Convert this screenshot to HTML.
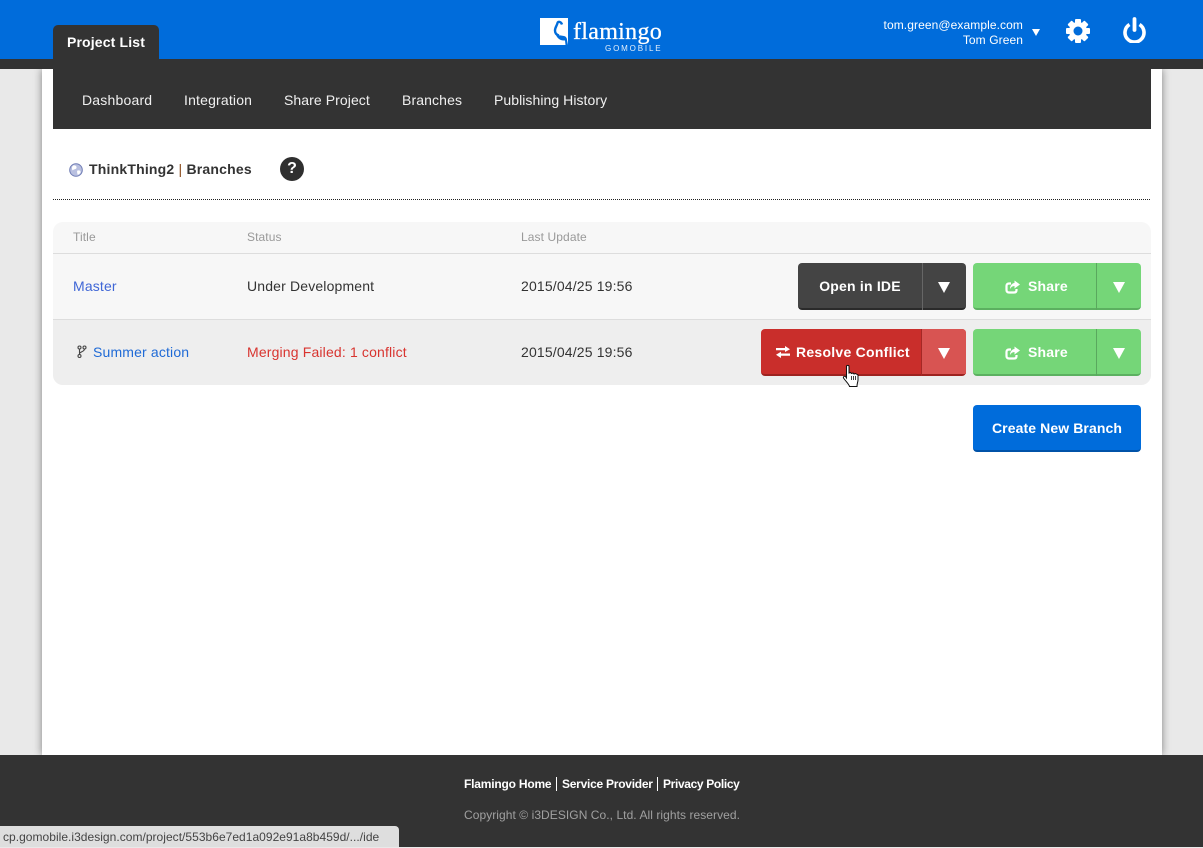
<!DOCTYPE html>
<html><head><meta charset="utf-8"><title>Branches</title>
<style>
html,body{margin:0;padding:0;width:1203px;height:847px;overflow:hidden;background:#e9e9e9;font-family:"Liberation Sans",sans-serif;}
.a{position:absolute;white-space:nowrap;}
.btn{position:absolute;height:47px;border-radius:4px;color:#fff;font-weight:bold;font-size:14px;line-height:46px;box-sizing:border-box;letter-spacing:.2px;}
.btn .sep{position:absolute;top:0;bottom:0;width:1px;}
.tri{position:absolute;width:0;height:0;border-left:6.5px solid transparent;border-right:6.5px solid transparent;border-top:11px solid #fff;top:19px;}
.th{font-size:12px;color:#999;top:230px;line-height:14px;letter-spacing:.1px;}
.td{font-size:14px;line-height:16px;letter-spacing:.16px;}
.nav{font-size:14px;color:#f0f0f0;top:92px;line-height:16px;}
</style></head><body>
<div class="a" style="left:0;top:0;width:1203px;height:59px;background:#006cdb"></div>
<div class="a" style="left:42px;top:69px;width:1120px;height:686px;background:#fff;box-shadow:0 0 8px rgba(0,0,0,.45)"></div>
<div class="a" style="left:0;top:59px;width:1203px;height:10px;background:#333"></div>
<div class="a" style="left:53px;top:25px;width:106px;height:34px;background:#333;border-radius:5px 5px 0 0;color:#fff;font-weight:bold;font-size:14px;line-height:34px;text-align:center;letter-spacing:.15px">Project List</div>
<div class="a" style="left:53px;top:59px;width:1098px;height:70px;background:#333"></div>
<div class="a nav" style="left:82px;letter-spacing:.2px">Dashboard</div>
<div class="a nav" style="left:184px;letter-spacing:.18px">Integration</div>
<div class="a nav" style="left:284px;letter-spacing:.08px">Share Project</div>
<div class="a nav" style="left:402px;letter-spacing:.12px">Branches</div>
<div class="a nav" style="left:494px;letter-spacing:.06px">Publishing History</div>

<svg class="a" style="left:540px;top:18px" width="29" height="28" viewBox="0 0 29 28"><rect width="28" height="27" fill="#fff"/><path d="M22 6.500C21 3.500 18 3 17.500 5C17 7.500 15 9.500 15 12.500C15 15.500 17 17 19 17.500" fill="none" stroke="#006cdb" stroke-width="2.400"/><path d="M15 13.500C16 18 20 17 24 18C26 18.500 27 20 27 22L28 27H25.500L25 22.500C20 23 16 20 15 13.500Z" fill="#006cdb"/></svg>
<div class="a" style="left:573px;top:18px;font-family:'Liberation Serif',serif;font-size:24px;line-height:28px;color:#fff;letter-spacing:.3px;-webkit-text-stroke:.3px #fff">flamingo</div>
<div class="a" style="left:605px;top:44px;font-size:8px;line-height:10px;color:#e4effb;letter-spacing:1.85px">GOMOBILE</div>

<div class="a" style="right:180px;top:18px;font-size:12px;line-height:15px;color:#fff;text-align:right;letter-spacing:.09px">tom.green@example.com<br>Tom Green</div>
<div class="a" style="left:1032px;top:29px;width:0;height:0;border-left:4px solid transparent;border-right:4px solid transparent;border-top:7px solid #fff"></div>
<svg class="a" style="left:1065px;top:18px" width="26" height="26" viewBox="0 0 26 26"><g fill="#fff"><circle cx="13" cy="13" r="9"/><rect x="10" y="1" width="6" height="6" rx="1"/><rect x="10" y="19" width="6" height="6" rx="1"/><rect x="1" y="10" width="6" height="6" rx="1"/><rect x="19" y="10" width="6" height="6" rx="1"/><g transform="rotate(45 13 13)"><rect x="10" y="1" width="6" height="6" rx="1"/><rect x="10" y="19" width="6" height="6" rx="1"/><rect x="1" y="10" width="6" height="6" rx="1"/><rect x="19" y="10" width="6" height="6" rx="1"/></g></g><circle cx="13" cy="13" r="4.500" fill="#006cdb"/></svg>
<svg class="a" style="left:1122px;top:17px" width="25" height="26" viewBox="0 0 25 26"><path d="M7.500 7.500A9.500 9.500 0 1 0 17.500 7.500" fill="none" stroke="#fff" stroke-width="3.600"/><path d="M12.500 2V13" stroke="#fff" stroke-width="3.800" stroke-linecap="round"/></svg>

<svg class="a" style="left:69px;top:163px" width="14" height="14" viewBox="0 0 14 14"><circle cx="7" cy="7" r="6.300" fill="#b9c0e0" stroke="#6f7cb4" stroke-width="1"/><path d="M4 2.500C6 2 8 3 7.500 5C7 6.500 4.500 6 3.500 7.500C3 6 2.500 4 4 2.500ZM8.500 7.500C10 7 12 7.500 11.500 9.500C10.500 11.500 9 12 8.500 11.500C8.500 10 7.500 8.500 8.500 7.500Z" fill="#fff"/></svg>
<div class="a" style="left:89px;top:161px;font-size:14px;line-height:16px;font-weight:bold;color:#333;letter-spacing:.2px">ThinkThing2 <span style="font-weight:normal;color:#8a4a1a">|</span> Branches</div>
<div class="a" style="left:280px;top:157px;width:24px;height:24px;border-radius:50%;background:#2f2f2f;color:#fff;font-weight:bold;font-size:16px;line-height:24px;text-align:center">?</div>
<div class="a" style="left:53px;top:199px;width:1098px;height:1px;background:repeating-linear-gradient(90deg,#222 0 1px,transparent 1px 2px)"></div>

<div class="a" style="left:53px;top:222px;width:1098px;height:163px;border-radius:10px;overflow:hidden;background:#f7f7f7">
<div class="a" style="left:0;top:31px;width:1098px;height:1px;background:#ddd"></div>
<div class="a" style="left:0;top:97px;width:1098px;height:1px;background:#ddd"></div>
<div class="a" style="left:0;top:98px;width:1098px;height:65px;background:#eee"></div>
</div>
<div class="a th" style="left:73px">Title</div>
<div class="a th" style="left:247px">Status</div>
<div class="a th" style="left:521px">Last Update</div>

<div class="a td" style="left:73px;top:278px;color:#3f66d6">Master</div>
<div class="a td" style="left:247px;top:278px;color:#333">Under Development</div>
<div class="a td" style="left:521px;top:278px;color:#333">2015/04/25 19:56</div>

<svg class="a" style="left:77px;top:345px" width="10" height="14" viewBox="0 0 10 14"><g fill="none" stroke="#444" stroke-width="1.100"><circle cx="2.500" cy="2.500" r="1.500"/><circle cx="7.500" cy="2.500" r="1.500"/><circle cx="2.500" cy="11" r="1.500"/><path d="M2.500 4V9.500M7.500 4C7.500 7 2.500 6.500 2.500 9"/></g></svg>
<div class="a td" style="left:93px;top:344px;color:#1f6ad6">Summer action</div>
<div class="a td" style="left:247px;top:344px;color:#d8342f">Merging Failed: 1 conflict</div>
<div class="a td" style="left:521px;top:344px;color:#333">2015/04/25 19:56</div>

<div class="btn" style="left:798px;top:263px;width:168px;background:#444;border-bottom:2px solid #2a2a2a">
<div class="a" style="left:0;width:124px;text-align:center">Open in IDE</div>
<div class="sep" style="left:124px;background:#666;bottom:-2px"></div>
<div class="tri" style="left:139.500px"></div></div>

<div class="btn" style="left:973px;top:263px;width:168px;background:#75d678;border-bottom:2px solid #5cb060">
<svg class="a" style="left:32px;top:17px" width="16" height="14" viewBox="0 0 16 14"><path d="M11.500 9V10Q11.500 12.500 9 12.500H4Q1.500 12.500 1.500 10V6Q1.500 3.500 4 3.500H6" fill="none" stroke="#fff" stroke-width="2.200"/><path d="M9.500 .5L15 4.500L9.500 8.500V6C7.500 6 6 7 5 9C5 5.500 7 3.200 9.500 3Z" fill="#fff"/></svg>
<div class="a" style="left:55px">Share</div>
<div class="sep" style="left:123px;background:#5aa85e;bottom:-2px"></div>
<div class="tri" style="left:139.500px"></div></div>

<div class="btn" style="left:761px;top:329px;width:205px;background:#c92e2b;border-bottom:2px solid #9d2320">
<svg class="a" style="left:15px;top:17px" width="14" height="12" viewBox="0 0 14 12"><path d="M0 2H9V0L14 3.200L9 6V4.300H0ZM14 7.500H5V5.800L0 8.800L5 12V9.800H14Z" fill="#fff"/></svg>
<div class="a" style="left:35px;letter-spacing:.26px">Resolve Conflict</div>
<div class="a" style="left:161px;top:0;width:44px;height:45px;background:#d85452;border-radius:0 4px 0 0"></div>
<div class="sep" style="left:160px;width:1px;background:#a52825;bottom:-2px"></div>
<div class="tri" style="left:176.500px"></div></div>

<div class="btn" style="left:973px;top:329px;width:168px;background:#75d678;border-bottom:2px solid #5cb060">
<svg class="a" style="left:32px;top:17px" width="16" height="14" viewBox="0 0 16 14"><path d="M11.500 9V10Q11.500 12.500 9 12.500H4Q1.500 12.500 1.500 10V6Q1.500 3.500 4 3.500H6" fill="none" stroke="#fff" stroke-width="2.200"/><path d="M9.500 .5L15 4.500L9.500 8.500V6C7.500 6 6 7 5 9C5 5.500 7 3.200 9.500 3Z" fill="#fff"/></svg>
<div class="a" style="left:55px">Share</div>
<div class="sep" style="left:123px;background:#5aa85e;bottom:-2px"></div>
<div class="tri" style="left:139.500px"></div></div>

<div class="btn" style="left:973px;top:405px;width:168px;background:#006cdb;border-bottom:2px solid #0052a8;text-align:center;letter-spacing:.1px">Create New Branch</div>

<svg class="a" style="left:842px;top:364px" width="20" height="24" viewBox="0 0 20 24"><path d="M4.500 2.500C4.500 1 7 1 7 2.500V9L8.500 8.500L9.500 9.500L11 9L12 10L13.500 9.500L16 11V16C16 18 15 19 15 22.500H7.500C7 20 3.500 17 1.500 14C1 12.500 2.500 12 3.500 12.500L4.500 14Z" fill="#fff" stroke="#111" stroke-width="1"/><path d="M9.500 12V16M11.500 12V16M13.500 12V16" stroke="#111" stroke-width=".8"/></svg>

<div class="a" style="left:0;top:755px;width:1203px;height:92px;background:#333"></div>
<div class="a" style="left:464px;top:777px;font-size:12px;line-height:14px;font-weight:bold;color:#fff;letter-spacing:-.2px">Flamingo Home</div>
<div class="a" style="left:556px;top:777px;width:1px;height:14px;background:#fff"></div>
<div class="a" style="left:562px;top:777px;font-size:12px;line-height:14px;font-weight:bold;color:#fff;letter-spacing:-.25px">Service Provider</div>
<div class="a" style="left:657px;top:777px;width:1px;height:14px;background:#fff"></div>
<div class="a" style="left:663px;top:777px;font-size:12px;line-height:14px;font-weight:bold;color:#fff;letter-spacing:-.35px">Privacy Policy</div>
<div class="a" style="left:464px;top:808px;font-size:12px;line-height:14px;color:#a0a0a0;letter-spacing:.06px">Copyright © i3DESIGN Co., Ltd. All rights reserved.</div>
<div class="a" style="left:0;top:826px;width:399px;height:21px;background:#dedede;border-radius:0 4px 0 0;font-size:12px;line-height:22px;color:#444;box-sizing:border-box;padding-left:3px;letter-spacing:.03px">cp.gomobile.i3design.com/project/553b6e7ed1a092e91a8b459d/.../ide</div>
</body></html>
